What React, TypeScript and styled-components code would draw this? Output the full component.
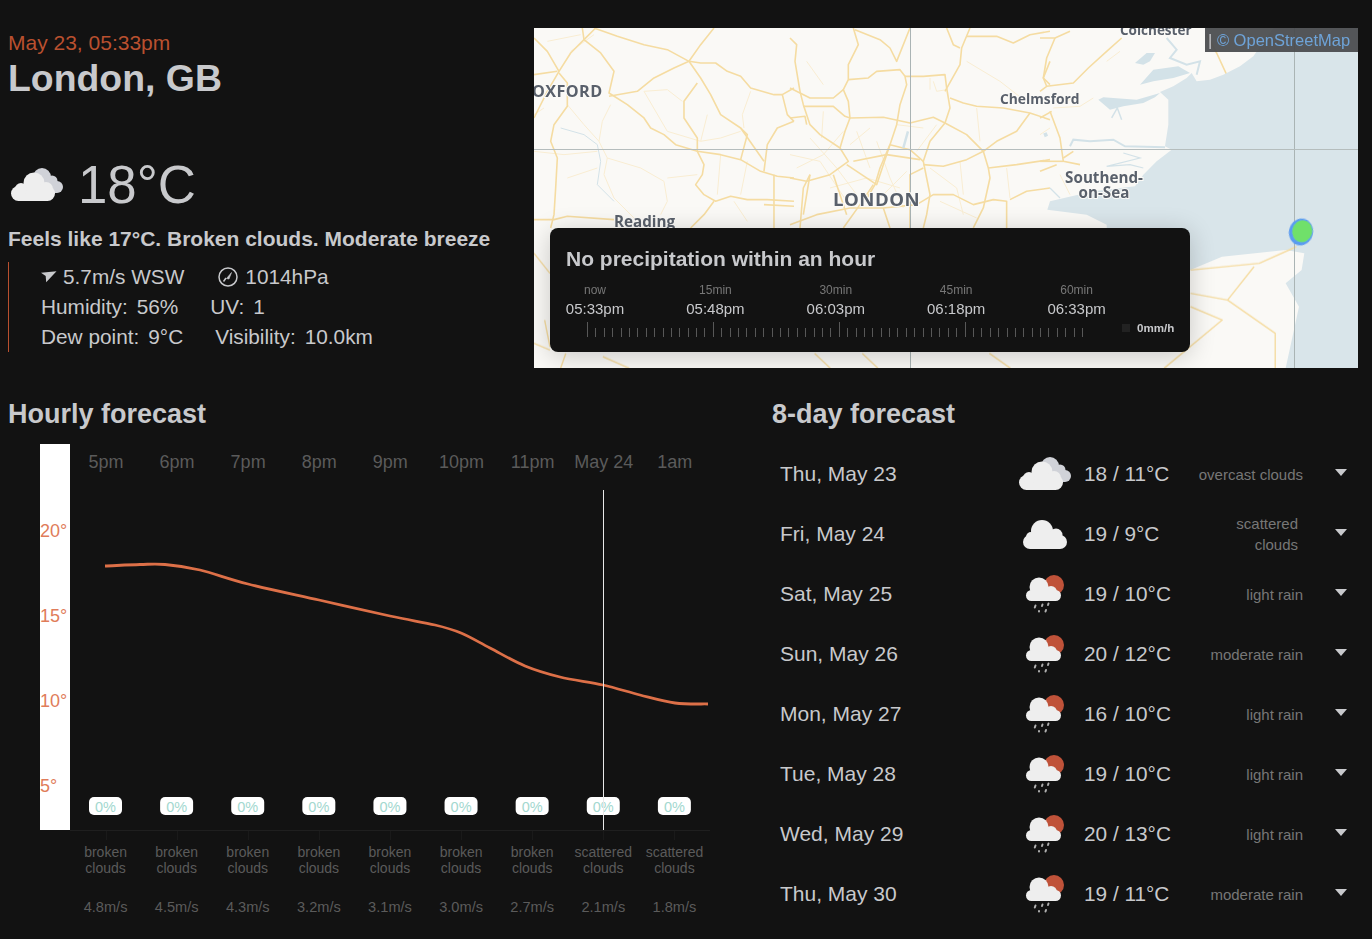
import React from "react";
import styled, { createGlobalStyle } from "styled-components";

const Global = createGlobalStyle`
  html, body { margin: 0; padding: 0; background: #121212; }
  body { font-family: "Liberation Sans", Arial, sans-serif; color: #c8c9cc; overflow: hidden; }
`;

const Page = styled.div`
  width: 1372px; height: 939px; box-sizing: border-box; padding: 28px 14px 0 8px; overflow: hidden;
`;
const Top = styled.section`display: grid; grid-template-columns: 526px 824px;`;
const Current = styled.div`display: flex; flex-direction: column;`;
const DateText = styled.div`font-size: 21px; line-height: 30px; color: #b9502f;`;
const City = styled.h1`margin: 0; font-size: 37.4px; line-height: 40px; font-weight: 700;`;
const TempRow = styled.div`margin-top: 57px; height: 60px; display: flex; align-items: center; gap: 15px; padding-left: 3px;`;
const TempValue = styled.span`font-size: 52.8px; line-height: 60px;`;
const Feels = styled.div`margin-top: 9px; font-size: 21px; line-height: 30px; font-weight: 700;`;
const Details = styled.div`margin-top: 8px; border-left: 1px solid #b9502f; padding-left: 32px; font-size: 20.8px; line-height: 30px;`;
const DetailRow = styled.div`display: flex; align-items: center;`;
const Item = styled.span<{ $gap?: number; $inner?: number }>`
  display: inline-flex; align-items: center; gap: ${p => p.$inner ?? 9}px; margin-left: ${p => p.$gap ?? 0}px;
`;
const MapBox = styled.div`position: relative; width: 824px; height: 340px; overflow: hidden; background: #faf9f6;`;
const MapSvg = styled.svg`display: block;`;
const Attribution = styled.div`
  position: absolute; top: 0; right: 0; width: 153px; height: 24px; box-sizing: border-box; padding-left: 3px;
  background: rgba(72, 74, 76, 0.93); font-size: 16.5px; line-height: 24px; color: #c8c9cc; white-space: nowrap;
`;
const AttrLink = styled.span`color: #6ea3d8;`;
const Panel = styled.div`
  position: absolute; left: 16px; top: 200px; width: 640px; height: 124px; box-sizing: border-box; padding: 16px;
  background: #121212; border-radius: 8px; box-shadow: 0 4px 26px rgba(0,0,0,.2);
`;
const PanelTitle = styled.div`font-size: 21px; line-height: 30px; font-weight: 700;`;
const Times = styled.div`display: grid; grid-template-columns: repeat(5, 120.4px); margin-top: 9px;`;
const TimeCell = styled.div`display: flex; flex-direction: column; align-items: center; width: 58px;`;
const TimeLabel = styled.span`font-size: 12px; line-height: 14px; color: #777;`;
const TimeValue = styled.span`font-size: 15px; line-height: 20px; margin-top: 2px; color: #c8c9cc;`;
const ScaleRow = styled.div`display: flex; align-items: flex-end; height: 15px; margin: 3px 0 0 21px; position: relative;`;
const Ticks = styled.div`display: flex; align-items: flex-end; width: 504px; height: 15px;`;
const Tick = styled.i<{ $major: boolean }>`
  display: block; width: 1px; height: ${p => (p.$major ? 15 : 9)}px; margin-right: 7.4px; background: #585858; flex: none;
`;
const Legend = styled.div`
  position: absolute; left: 535px; top: -3px; display: flex; align-items: center; gap: 7px;
  font-size: 11.6px; line-height: 18px; font-weight: 700; color: #c8c9cc;
`;
const Swatch = styled.i`display: block; width: 8px; height: 8px; background: #222;`;

const Bottom = styled.section`display: grid; grid-template-columns: 764px 586px; margin-top: 30px;`;
const Heading = styled.h2`margin: 0; font-size: 27px; line-height: 32px; font-weight: 700;`;
const ChartWrap = styled.div`margin-top: 14px; padding-left: 32px;`;
const Columns = styled.div`display: grid; grid-template-columns: repeat(9, 71.11px); margin: 4px 0 0 62px;`;
const Col = styled.div`display: flex; flex-direction: column; align-items: center; color: #5b5b5b; text-align: center;`;
const ColDesc = styled.div`font-size: 14px; line-height: 16px; height: 32px;`;
const ColWind = styled.div`font-size: 14.6px; line-height: 18px; margin-top: 22px;`;
const Daily = styled.div`margin-top: 14px; display: flex; flex-direction: column;`;
const Day = styled.div`
  height: 60px; box-sizing: border-box; padding: 0 11px 0 8px; display: grid;
  grid-template-columns: 232px 66px 115px 110px 44px; align-items: center;
`;
const DayName = styled.div`font-size: 21px; white-space: nowrap;`;
const IconCell = styled.div`display: flex; justify-content: center; align-items: center;`;
const DayTemp = styled.div`font-size: 20.8px; padding-left: 6px; white-space: nowrap;`;
const DayDesc = styled.div<{ $inset?: boolean }>`
  font-size: 15px; line-height: 21px; color: #777; text-align: right; padding-right: ${p => (p.$inset ? 5 : 0)}px; white-space: nowrap;
`;
const Caret = styled.div`
  justify-self: end; width: 0; height: 0; margin-bottom: 4px;
  border-left: 6px solid transparent; border-right: 6px solid transparent; border-top: 7px solid #c8c9cc;
`;

const W = "#eeeeee", G = "#d0d2d8", S = "#bf5239";
const BrokenIcon = () => (
  <svg width="52" height="34" viewBox="0 0 52 34">
    <g fill={G}>
      <circle cx="31" cy="9" r="9" /><circle cx="41" cy="13" r="5.5" /><circle cx="46" cy="19" r="6" /><rect x="30" y="12" width="16" height="13" />
    </g>
    <g fill={W}>
      <circle cx="23" cy="15" r="10.5" /><circle cx="35" cy="21" r="7" /><rect x="0" y="18" width="44" height="15" rx="7.5" />
      <circle cx="10" cy="21" r="6" />
    </g>
  </svg>
);
const CloudIcon = () => (
  <svg width="44" height="29" viewBox="0 0 44 29">
    <g fill={W}>
      <circle cx="19" cy="11" r="11" /><circle cx="33" cy="15" r="6.5" /><circle cx="8" cy="17" r="5" /><rect x="0" y="15" width="44" height="14" rx="7" />
    </g>
  </svg>
);
const RainIcon = () => (
  <svg width="40" height="38" viewBox="0 0 40 38">
    <circle cx="29" cy="10" r="10" fill={S} />
    <g fill={W}>
      <circle cx="14" cy="12" r="9.5" /><circle cx="26" cy="17" r="6" /><rect x="1" y="15" width="35" height="11" rx="5.5" />
    </g>
    <g stroke="#b0b0b0" strokeWidth="2" strokeLinecap="round">
      <path d="M10.5 30.5l-.7 2" /><path d="M17.5 29.5l-.5 1.5" /><path d="M23.5 28.5l-.5 1.5" /><path d="M14 36l0 .5" /><path d="M21 35l-.5 1.5" />
    </g>
  </svg>
);
const WindIcon = () => (
  <svg width="16" height="12" viewBox="0 0 17 12"><path d="M0 1.5L16.5 0L5.5 11.5L5 5Z" fill="#c8c9cc" /></svg>
);
const GaugeIcon = () => (
  <svg width="20" height="20" viewBox="0 0 20 20" fill="none" stroke="#c8c9cc">
    <circle cx="10" cy="10" r="9" strokeWidth="1.5" /><path d="M5.5 14.5L8 11" strokeWidth="1.5" /><path d="M8.5 11.5L13.5 5.5L11 12Z" fill="#c8c9cc" strokeWidth=".6" />
  </svg>
);

const MAIN = "#f5dca2", THIN = "#f9edd2", WATER = "#d3e2e8";

const leftRoads = [
  "M0,140L70,130","M145,0L150,35L110,75L75,130L40,190L0,270","M0,30L40,70L75,130",
  "M185,0L150,35L200,75L240,130L225,195L280,230L330,270L350,300L390,320L425,350L490,370L560,380L620,395L680,430L730,445L780,450",
  "M180,0L250,25L330,50L400,65L465,100L500,105L545,105L580,130L620,145L650,180L720,200L745,200L780,180","M225,205L310,190L360,150L420,120L465,100",
  "M540,0L500,50L465,100L500,150L530,200L560,260L620,300L640,320L620,395","M490,165L450,220L450,270L490,330L490,370L510,410L505,440L485,470L510,500L545,520L590,505L640,515L700,515L780,520",
  "M75,135L100,165L100,235L60,290L50,340L70,390L65,480L60,560L50,600","M0,575L60,575L100,565L240,575","M540,520L510,560L470,600","M745,200L760,260L780,280","M780,280L730,300L700,350L690,430",
  "M620,300L690,400","M720,440L720,600","M690,530L780,535",
];
const leftFaint = [
  "M230,230L205,280L195,340L220,390L210,440L240,510L300,570","M330,190L400,185L445,220","M100,230L150,290L195,340","M0,370L90,380L190,370","M220,390L320,420L390,460L400,520L380,560",
  "M400,450L490,440","M650,190L625,260L630,300","M520,260L500,340L560,330L620,310","M0,260L30,240","M640,400L620,500","M560,380L550,500","M500,340L400,310L330,190","M40,40L140,20","M110,70L180,20","M100,450L190,420","M600,520L640,580",
];
const midRoads = [
  "M0,30L20,50L15,100L30,190L40,230L60,290L90,320L150,360L175,400L120,440L50,460L0,450","M190,0L205,50L175,110L175,155L160,185L175,220L180,270L165,310L150,360","M195,5L270,35L300,60L320,100L360,0",
  "M175,155L235,150L260,130L330,125L345,145L350,170L330,230L320,290L300,350L270,420L255,470L225,520","M345,145L400,145L465,140L470,180L480,240L465,285L420,340L400,400L410,450L420,500L410,560L400,600",
  "M0,180L60,210L130,210L160,185","M40,235L130,235L165,265L180,270","M0,270L45,265L50,290","M180,270L280,268L360,285L430,268L465,285L530,320L580,370L595,420L600,450L580,540L550,600",
  "M540,0L515,60L510,110L465,190","M530,25L620,25L670,45L720,20L780,10","M780,100L760,150L780,170","M480,210L520,225L560,235L640,240L720,255L780,275","M720,255L680,310L620,340L580,370","M400,410L460,415L530,395L580,370",
  "M595,420L680,410L780,395","M30,600L40,480L60,440","M170,410L260,470L290,380L300,350","M190,400L290,380L390,395","M360,600L360,440L400,420",
  "M0,590L80,560L180,540L280,540L380,530L430,500L490,500L550,530L610,515L650,520L650,600","M780,480L710,490L660,515","M470,0L490,50L510,60","M300,350L360,365L400,400","M60,440L40,560","M130,440L170,560","M250,470L210,530L160,600","M280,540L300,600",
];
const midFaint = [
  "M50,100L100,170","M530,100L630,160L720,230","M560,240L570,340","M440,290L380,370","M240,300L180,350","M20,420L100,380L160,310","M60,330L140,420L200,500","M200,310L240,420","M0,380L90,400L170,520","M320,290L400,300","M420,420L500,480L520,560",
  "M430,160L440,190L470,185","M420,150L420,185","M100,250L95,330","M650,420L660,510","M510,400L520,500","M450,520L560,570","M260,340L300,450L340,540","M120,480L230,450L330,480","M350,430L260,520",
];
const rightRoads = [
  "M0,30L45,30L90,10","M45,30L20,90L10,150L20,175L0,190","M245,30L200,70L145,120L100,165L20,175","M500,20L530,75L560,140","M30,250L60,330L70,400L120,410","M0,400L70,400","M0,270L35,250","M70,390L100,370","M0,430L50,410",
];
const rightFaint = ["M160,210L120,235L40,240","M200,100L240,70","M60,440L90,500","M120,200L60,230","M0,320L30,300"];
const bottomRoads = [
  "M1240,750L1370,730L1440,680","M1360,740L1310,840L1240,820","M1310,840L1400,940L1400,1045","M1240,860L1300,900L1190,1045","M130,1010L180,1045","M530,1000L560,1045","M620,1000L650,1045","M860,1000L900,1045","M0,970L30,990","M0,700L30,760","M20,900L30,980","M60,1000L50,1045",
];

const Lines = ({ items, color, width }: { items: string[]; color: string; width: number }) => (
  <>{items.map(d => <path key={d} d={d} stroke={color} strokeWidth={width} strokeLinejoin="round" vectorEffect="non-scaling-stroke" />)}</>
);

const MapDrawing = () => (
  <MapSvg width="824" height="340" viewBox="0 0 824 340">
    <defs>
      <filter id="soft" x="0" y="0" width="100%" height="100%"><feGaussianBlur stdDeviation="0.55" /></filter>
    </defs>
    <g filter="url(#soft)" fill="none">
      <g transform="scale(.3333)">
        <Lines items={leftFaint} color={THIN} width={1} />
        <Lines items={leftRoads} color={MAIN} width={1.6} />
      </g>
      <g transform="translate(256,0) scale(.3333)">
        <Lines items={midFaint} color={THIN} width={1} />
        <Lines items={midRoads} color={MAIN} width={1.6} />
      </g>
      <g transform="translate(506,0) scale(.3333)">
        <Lines items={rightFaint} color={THIN} width={1} />
        <Lines items={rightRoads} color={MAIN} width={1.6} />
        <path fill="#d9e5ea" d="M700,0L640,85L600,115L550,140L510,155L470,160L455,135L440,150L400,175L360,192L385,215L385,290L375,355L395,365L350,400L310,440L285,475L160,490L30,520L22,545L140,560L200,590L205,720L451,726L546,686L737,666L793,676L785,726L737,766L777,836L737,1021L954,1021L954,0Z" />
        <path fill={WATER} d="M360,195L290,215L190,208L175,215L210,245L250,235L310,225L345,208Z" />
        <path fill={WATER} d="M300,170L340,125L415,115L450,135L400,150L340,160Z" />
        <path fill={WATER} d="M285,105L320,75L345,75L330,100L310,110Z" />
        <g stroke={WATER}>
          <path d="M380,30L410,65L390,90L440,110L480,100L470,140" strokeWidth="2" vectorEffect="non-scaling-stroke" />
          <path d="M215,270L232,240L245,275" strokeWidth="1.5" vectorEffect="non-scaling-stroke" />
          <path d="M90,355L100,335L150,340L220,335L255,355L375,358" strokeWidth="2" vectorEffect="non-scaling-stroke" />
          <path d="M250,375L300,390L200,415L270,410L310,420" strokeWidth="1.2" vectorEffect="non-scaling-stroke" />
          <path d="M22,318L12,322" strokeWidth="4" vectorEffect="non-scaling-stroke" />
          <path d="M30,480L60,510" strokeWidth="1.2" vectorEffect="non-scaling-stroke" />
        </g>
      </g>
      <g transform="translate(0,-8) scale(.5294,.3333)">
        <Lines items={bottomRoads} color={MAIN} width={1.4} />
      </g>
      <g transform="translate(0,0) scale(.3333)" stroke={WATER}>
        <path d="M80,300L150,320L190,350L200,400L190,470L240,520" strokeWidth="1" vectorEffect="non-scaling-stroke" />
        <path d="M1122,310L1108,360" strokeWidth="2.5" vectorEffect="non-scaling-stroke" />
      </g>
    </g>
    <path d="M376.5 0V340M760.5 0V340" stroke="#aab4b4" strokeWidth="1" />
    <path d="M0 121.5H824" stroke="#b5bdbd" strokeWidth="1" />
    <g transform="rotate(14 767 204)" filter="url(#soft)">
      <ellipse cx="767" cy="204" rx="12" ry="13.5" fill="#5a9bf0" />
      <ellipse cx="768" cy="203" rx="10" ry="11" fill="#6fe06b" />
    </g>
    <g fontFamily="'Open Sans', sans-serif" fontWeight="700" fill="#59606b" stroke="#fbfaf7" strokeWidth="2" paintOrder="stroke">
      <text x="586" y="7" fontSize="13.5">Colchester</text>
      <text x="-2" y="69" fontSize="16.2" letterSpacing=".4">OXFORD</text>
      <text x="466" y="76" fontSize="13.8">Chelmsford</text>
      <text x="570" y="155" fontSize="15.2" textAnchor="middle">Southend-</text>
      <text x="570" y="170" fontSize="15.2" textAnchor="middle">on-Sea</text>
      <text x="299" y="178" fontSize="18.6" letterSpacing=".5">LONDON</text>
      <text x="80" y="199" fontSize="15.2">Reading</text>
    </g>
  </MapSvg>
);

const curvePts: [number, number][] = [[105,566],[140,564.5],[165,564.5],[200,570],[248,584],[319,600],[390,616],[435,625],[461,633],[490,648],[525,666],[560,677],[603,685],[640,695],[675,703],[708,704]];
const curve = curvePts.reduce((acc, p, i, a) => {
  if (i === 0) return `M${p[0]} ${p[1]}`;
  const p0 = a[Math.max(0, i - 2)], p1 = a[i - 1], p3 = a[Math.min(a.length - 1, i + 1)];
  const c1 = [p1[0] + (p[0] - p0[0]) / 6, p1[1] + (p[1] - p0[1]) / 6];
  const c2 = [p[0] - (p3[0] - p1[0]) / 6, p[1] - (p3[1] - p1[1]) / 6];
  return `${acc}C${c1[0].toFixed(1)} ${c1[1].toFixed(1)} ${c2[0].toFixed(1)} ${c2[1].toFixed(1)} ${p[0]} ${p[1]}`;
}, "");

const hours = [
  ["5pm","broken","4.8m/s"],["6pm","broken","4.5m/s"],["7pm","broken","4.3m/s"],["8pm","broken","3.2m/s"],["9pm","broken","3.1m/s"],
  ["10pm","broken","3.0m/s"],["11pm","broken","2.7m/s"],["May 24","scattered","2.1m/s"],["1am","scattered","1.8m/s"],
];
const cx = (i: number) => 105.5 + i * 71.11;

const Chart = () => (
  <svg width="670" height="396" viewBox="40 444 670 396" style={{ display: "block" }} fontFamily="'Liberation Sans', sans-serif">
    <rect x="40" y="444" width="30" height="386" fill="#fff" />
    {[["20°",537],["15°",622],["10°",707],["5°",792]].map(([t, y]) => (
      <text key={t} x="40" y={y} fontSize="18" fill="#e07c5a">{t}</text>
    ))}
    {hours.map((h, i) => <text key={h[0]} x={cx(i) + .4} y="468" fontSize="18" fill="#5b5b5b" textAnchor="middle">{h[0]}</text>)}
    <path d="M70 830.5H710" stroke="#1f1f1f" />
    {hours.map((h, i) => <path key={h[0]} d={`M${Math.round(cx(i)) + .5} 831V840`} stroke="#1a1a1a" />)}
    <path d={curve} fill="none" stroke="#dd7048" strokeWidth="2.8" />
    {hours.map((h, i) => (
      <g key={h[0]}>
        <rect x={cx(i) - 16.5} y="797" width="33" height="18" rx="5" fill="#fff" />
        <text x={cx(i)} y="811.5" fontSize="14.5" fill="#a3d8cf" textAnchor="middle">0%</text>
      </g>
    ))}
    <path d="M603.5 490V830" stroke="#e8e8e8" strokeWidth="1" />
  </svg>
);

const days: { d: string; t: string; desc: React.ReactNode; icon: "b" | "c" | "r"; inset?: boolean }[] = [
  { d: "Thu, May 23", t: "18 / 11°C", desc: "overcast clouds", icon: "b" },
  { d: "Fri, May 24", t: "19 / 9°C", desc: <>scattered<br />clouds</>, icon: "c", inset: true },
  { d: "Sat, May 25", t: "19 / 10°C", desc: "light rain", icon: "r" },
  { d: "Sun, May 26", t: "20 / 12°C", desc: "moderate rain", icon: "r" },
  { d: "Mon, May 27", t: "16 / 10°C", desc: "light rain", icon: "r" },
  { d: "Tue, May 28", t: "19 / 10°C", desc: "light rain", icon: "r" },
  { d: "Wed, May 29", t: "20 / 13°C", desc: "light rain", icon: "r" },
  { d: "Thu, May 30", t: "19 / 11°C", desc: "moderate rain", icon: "r" },
];
const minutes = [["now","05:33pm"],["15min","05:48pm"],["30min","06:03pm"],["45min","06:18pm"],["60min","06:33pm"]];

export default function App() {
  return (
    <Page>
      <Global />
      <Top>
        <Current>
          <DateText>May 23, 05:33pm</DateText>
          <City>London, GB</City>
          <TempRow><BrokenIcon /><TempValue>18°C</TempValue></TempRow>
          <Feels>Feels like 17°C. Broken clouds. Moderate breeze</Feels>
          <Details>
            <DetailRow>
              <Item $inner={6}><WindIcon />5.7m/s WSW</Item>
              <Item $gap={34} $inner={7}><GaugeIcon />1014hPa</Item>
            </DetailRow>
            <DetailRow>
              <Item>Humidity: <span>56%</span></Item>
              <Item $gap={32}>UV: <span>1</span></Item>
            </DetailRow>
            <DetailRow>
              <Item>Dew point: <span>9°C</span></Item>
              <Item $gap={32}>Visibility: <span>10.0km</span></Item>
            </DetailRow>
          </Details>
        </Current>
        <MapBox>
          <MapDrawing />
          <Attribution>| <AttrLink>© OpenStreetMap</AttrLink></Attribution>
          <Panel>
            <PanelTitle>No precipitation within an hour</PanelTitle>
            <Times>
              {minutes.map(m => (
                <TimeCell key={m[0]}><TimeLabel>{m[0]}</TimeLabel><TimeValue>{m[1]}</TimeValue></TimeCell>
              ))}
            </Times>
            <ScaleRow>
              <Ticks>{Array.from({ length: 60 }, (_, i) => <Tick key={i} $major={i % 15 === 0} />)}</Ticks>
              <Legend><Swatch />0mm/h</Legend>
            </ScaleRow>
          </Panel>
        </MapBox>
      </Top>
      <Bottom>
        <div>
          <Heading>Hourly forecast</Heading>
          <ChartWrap><Chart /></ChartWrap>
          <Columns>
            {hours.map(h => (
              <Col key={h[0]}>
                <ColDesc>{h[1]}<br />clouds</ColDesc>
                <ColWind>{h[2]}</ColWind>
              </Col>
            ))}
          </Columns>
        </div>
        <div>
          <Heading>8-day forecast</Heading>
          <Daily>
            {days.map(d => (
              <Day key={d.d}>
                <DayName>{d.d}</DayName>
                <IconCell>{d.icon === "b" ? <BrokenIcon /> : d.icon === "c" ? <CloudIcon /> : <RainIcon />}</IconCell>
                <DayTemp>{d.t}</DayTemp>
                <DayDesc $inset={d.inset}>{d.desc}</DayDesc>
                <Caret />
              </Day>
            ))}
          </Daily>
        </div>
      </Bottom>
    </Page>
  );
}
